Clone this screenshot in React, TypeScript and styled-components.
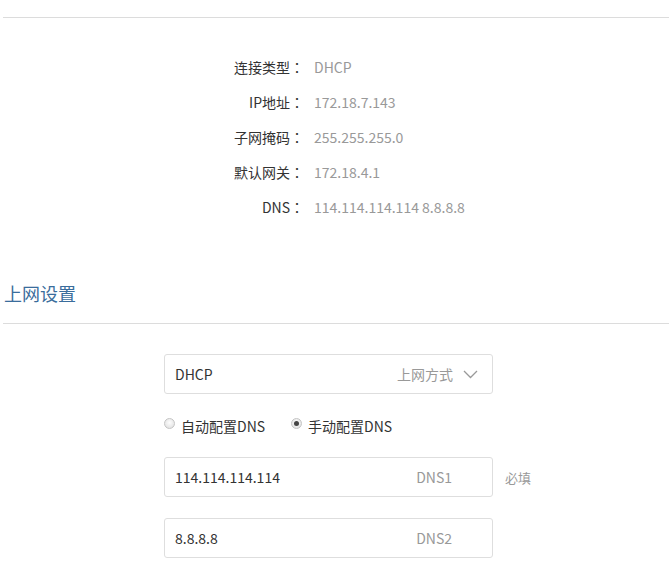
import React from "react";
import styled, { createGlobalStyle } from "styled-components";

const GlobalStyle = createGlobalStyle`
  html, body {
    margin: 0;
    padding: 0;
    background: #fff;
  }
  body {
    font-family: "Noto Sans CJK SC", "Noto Sans", sans-serif;
    color: #333;
  }
`;

const Page = styled.div`
  width: 669px;
  padding-top: 17px;
  display: flex;
  flex-direction: column;
`;

const Divider = styled.div`
  height: 1px;
  margin-left: 3px;
  background: #dcdcdc;
`;

const InfoList = styled.div`
  display: grid;
  grid-template-columns: 304px 1fr;
  column-gap: 10px;
  margin-top: 32px;
`;

const InfoLabel = styled.div`
  height: 35px;
  line-height: 35px;
  text-align: right;
  font-size: 14px;
  color: #333;
`;

/* TC face centres full-width punctuation, as the reference does */
const Colon = styled.span`
  font-family: "Noto Sans CJK TC", sans-serif;
`;

const InfoValue = styled.div`
  height: 35px;
  line-height: 35px;
  font-size: 14px;
  color: #999;
`;

const SectionTitle = styled.h2`
  margin: 56px 0 0 4px;
  height: 24px;
  line-height: 24px;
  font-size: 18px;
  font-weight: 400;
  color: #3a6d9c;
`;

const SectionDivider = styled(Divider)`
  margin-top: 18px;
`;

const Form = styled.div`
  display: flex;
  flex-direction: column;
  padding-left: 164px;
  margin-top: 30px;
`;

const FieldRow = styled.div<{ gap?: number }>`
  display: flex;
  align-items: center;
  margin-top: ${({ gap }) => gap ?? 0}px;
`;

const Field = styled.div`
  box-sizing: border-box;
  width: 329px;
  height: 40px;
  border: 1px solid #dedede;
  border-radius: 3px;
  display: flex;
  align-items: center;
  padding: 0 14px 0 10px;
  font-size: 14px;
`;

const FieldValue = styled.div`
  flex: 1;
  color: #333;
`;

const FieldHint = styled.div<{ last?: boolean }>`
  color: #999;
  margin-right: ${({ last }) => (last ? 26 : 0)}px;
`;

const Chevron = styled.svg`
  margin-left: 10px;
  width: 15px;
  height: 9px;
`;

const Required = styled.span`
  margin-left: 12px;
  font-size: 13px;
  color: #999;
`;

const RadioGroup = styled.div`
  display: flex;
  align-items: center;
  height: 24px;
  margin-top: 20px;
  gap: 26px;
`;

const RadioOption = styled.label`
  display: flex;
  align-items: center;
  font-size: 14px;
  color: #333;
  cursor: pointer;
`;

const RadioDot = styled.span<{ checked?: boolean }>`
  box-sizing: border-box;
  width: 11px;
  height: 11px;
  border-radius: 50%;
  border: 1px solid #c4c4c4;
  background: radial-gradient(circle at 50% 40%, #fdfdfd, #dcdcdc);
  margin-right: 6px;
  position: relative;
  top: -3px;
  display: flex;
  align-items: center;
  justify-content: center;

  &::after {
    content: "";
    width: 5px;
    height: 5px;
    border-radius: 50%;
    background: #444;
    display: ${({ checked }) => (checked ? "block" : "none")};
  }
`;

const info = [
  ["连接类型", "DHCP"],
  ["IP地址", "172.18.7.143"],
  ["子网掩码", "255.255.255.0"],
  ["默认网关", "172.18.4.1"],
  ["DNS", "114.114.114.114 8.8.8.8"],
];

export default function App() {
  return (
    <>
      <GlobalStyle />
      <Page>
        <Divider />
        <InfoList>
          {info.map(([label, value]) => (
            <React.Fragment key={label}>
              <InfoLabel>
                {label}
                <Colon>：</Colon>
              </InfoLabel>
              <InfoValue>{value}</InfoValue>
            </React.Fragment>
          ))}
        </InfoList>

        <SectionTitle>上网设置</SectionTitle>
        <SectionDivider />

        <Form>
          <FieldRow>
            <Field>
              <FieldValue>DHCP</FieldValue>
              <FieldHint>上网方式</FieldHint>
              <Chevron viewBox="0 0 15 9">
                <polyline points="1,1 7.5,7.5 14,1" fill="none" stroke="#999" strokeWidth="1.3" />
              </Chevron>
            </Field>
          </FieldRow>

          <RadioGroup>
            <RadioOption>
              <RadioDot />
              自动配置DNS
            </RadioOption>
            <RadioOption>
              <RadioDot checked />
              手动配置DNS
            </RadioOption>
          </RadioGroup>

          <FieldRow gap={19}>
            <Field>
              <FieldValue>114.114.114.114</FieldValue>
              <FieldHint last>DNS1</FieldHint>
            </Field>
            <Required>必填</Required>
          </FieldRow>

          <FieldRow gap={21}>
            <Field>
              <FieldValue>8.8.8.8</FieldValue>
              <FieldHint last>DNS2</FieldHint>
            </Field>
          </FieldRow>
        </Form>
      </Page>
    </>
  );
}
